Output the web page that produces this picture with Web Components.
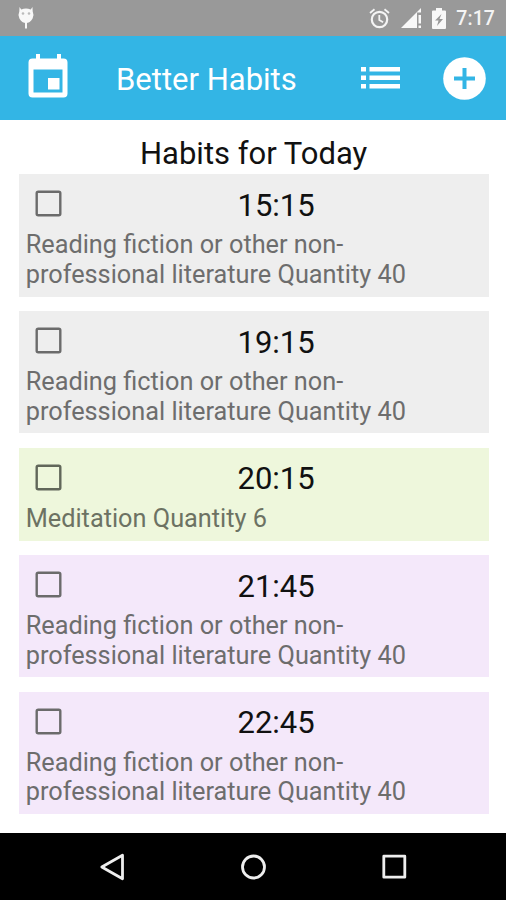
<!DOCTYPE html>
<html lang="en">
<head>
<meta charset="utf-8">
<title>Better Habits</title>
<style>
    body {
        margin: 0;
        background: #fff;
        font-family: Roboto, 'Noto Sans', sans-serif;
    }
</style>
</head>
<body>
<habits-app></habits-app>

<script>
// Android status bar: notification, alarm, signal, battery, clock
class StatusBar extends HTMLElement {
    constructor() {
        super();
        this.attachShadow({ mode: 'open' });
    }

    connectedCallback() {
        this.shadowRoot.innerHTML = `
        <style>
            :host {
                display: flex;
                align-items: center;
                height: 36px;
                box-sizing: border-box;
                padding: 0 11px 0 17px;
                background: #999;
                color: #f4f4f4;
            }
            svg { display: block; fill: #f8f8f8; }
            .alarm { margin-left: auto; }
            .signal { margin-left: 11px; }
            .battery { margin-left: 11px; }
            time {
                margin-left: 10px;
                font-size: 19.5px;
                font-weight: 500;
                letter-spacing: 0.1px;
                line-height: 36px;
                padding-top: 2px;
            }
        </style>
        <svg width="18" height="24" viewBox="0 0 18 24">
            <path d="M2.500 1l1.800 2.600Q9 1.600 13.700 3.600L15.500 1l.2 4.500Q17.400 9 15.600 12.500Q13 17 9 17T2.400 12.500Q.6 9 2.300 5.500z"/>
            <path d="M8 16h2v6l-1 1-1-1z"/>
            <circle cx="6" cy="7.500" r="1.300" fill="#bbb"/>
            <circle cx="12" cy="7.500" r="1.300" fill="#bbb"/>
        </svg>
        <svg class="alarm" width="21" height="21" viewBox="0 0 21 21">
            <circle cx="10.500" cy="11.500" r="7.700" fill="none" stroke="#f4f4f4" stroke-width="2.200"/>
            <path d="M10.300 7v5l3.800 2.300M1 5l4.500-3.700M20 5l-4.500-3.700" fill="none" stroke="#f4f4f4" stroke-width="1.800"/>
        </svg>
        <svg class="signal" width="20" height="20" viewBox="0 0 20 20">
            <path d="M0 20L20 0v4.500h-4V20zM17.500 7H20v8.500h-2.500zM17.500 17.500H20V20h-2.500z"/>
        </svg>
        <svg class="battery" width="14" height="21" viewBox="0 0 14 21">
            <path fill-rule="evenodd" d="M4 0h6v2.500h3q1 0 1 1V20q0 1-1 1H1q-1 0-1-1V3.500q0-1 1-1h3zM9.500 6L3 12.500h3.500L5 18l6-7H7.500z"/>
        </svg>
        <time>7:17</time>
        `;
    }
}
customElements.define('status-bar', StatusBar);

// Blue bar with the title in the slot
class AppHeader extends HTMLElement {
    constructor() {
        super();
        this.attachShadow({ mode: 'open' });
    }

    connectedCallback() {
        this.shadowRoot.innerHTML = `
        <style>
            :host {
                display: flex;
                align-items: center;
                height: 84px;
                box-sizing: border-box;
                padding: 0 20px 0 28px;
                background: #33b5e5;
                color: #fff;
            }
            button {
                display: block;
                padding: 0;
                border: 0;
                background: none;
            }
            svg { display: block; fill: #fff; }
            h1 {
                margin: 3px 0 0 48px;
                flex: 1;
                font-size: 31px;
                font-weight: 400;
                white-space: nowrap;
            }
            .calendar { margin-top: -4px; }
            .add { margin-left: 43px; }
        </style>
        <button class="calendar" aria-label="Calendar">
            <svg width="40" height="44" viewBox="0 0 40 44">
                <path fill-rule="evenodd" d="M8 0h4v4.500h17V0h4v4.500h2.500q4 0 4 4V39.500q0 4-4 4H4.500q-4 0-4-4V8.500q0-4 4-4H8zM5.500 15.500V38.500h29V15.500z"/>
                <path d="M20 24h11.500v11.500H20z"/>
            </svg>
        </button>
        <h1><slot></slot></h1>
        <button aria-label="List">
            <svg width="39" height="22" viewBox="0 0 39 22">
                <path d="M0 0h5v4.500H0zM8.500 0H39v4.500H8.500zM0 8.500h5V13H0zM8.500 8.500H39V13H8.500zM0 17h5v4.500H0zM8.500 17H39v4.500H8.500z"/>
            </svg>
        </button>
        <button class="add" aria-label="Add">
            <svg width="43" height="43" viewBox="0 0 43 43">
                <circle cx="21.500" cy="21.500" r="21.300"/>
                <path d="M21.500 11v21M11 21.500h21" stroke="#33b5e5" stroke-width="4"/>
            </svg>
        </button>
        `;
    }
}
customElements.define('app-header', AppHeader);

// One habit: checkbox, time attribute, description in the slot
class HabitCard extends HTMLElement {
    constructor() {
        super();
        this.attachShadow({ mode: 'open' });
    }

    connectedCallback() {
        this.shadowRoot.innerHTML = `
        <style>
            :host {
                display: block;
                box-sizing: border-box;
                padding: 7px 7px 7.200px;
                background: #eee;
            }
            :host([color="green"]) { background: #eef7dc; }
            :host([color="purple"]) { background: #f4e8fa; }
            .top {
                display: flex;
                align-items: center;
                height: 48px;
            }
            .box {
                display: block;
                margin: -3px 9px 0 9px;
                fill: none;
                stroke: #6b6b6b;
                stroke-width: 2.400;
            }
            time {
                flex: 1;
                text-align: center;
                font-size: 31px;
                color: #111;
            }
            p {
                margin: 1px 0 0;
                font-size: 25.300px;
                line-height: 29.600px;
                color: #6d6d6d;
            }
            :host([color="green"]) p { color: #6c7263; }
            :host([color="green"]) .box { stroke: #61675a; }
        </style>
        <div class="top">
            <svg class="box" width="27" height="27" viewBox="0 0 27 27" role="checkbox" aria-checked="false">
                <rect x="1.700" y="1.700" width="23.600" height="23.600" rx="1.500"/>
            </svg>
            <time>${this.getAttribute('time')}</time>
        </div>
        <p><slot></slot></p>
        `;
    }
}
customElements.define('habit-card', HabitCard);

class NavBar extends HTMLElement {
    constructor() {
        super();
        this.attachShadow({ mode: 'open' });
    }

    connectedCallback() {
        this.shadowRoot.innerHTML = `
        <style>
            :host {
                display: flex;
                align-items: center;
                justify-content: center;
                gap: 114px;
                height: 67px;
                background: #000;
            }
            svg {
                display: block;
                fill: none;
                stroke: #eee;
                stroke-width: 2.800;
                stroke-linejoin: round;
            }
        </style>
        <svg width="27" height="28" viewBox="0 0 27 28"><path d="M2.800 14L23.500 2.200v23.600z"/></svg>
        <svg width="27" height="28" viewBox="0 0 27 28"><circle cx="13.500" cy="14" r="11"/></svg>
        <svg width="27" height="28" viewBox="0 0 27 28"><rect x="2.800" y="3.200" width="21" height="21"/></svg>
        `;
    }
}
customElements.define('nav-bar', NavBar);

const habits = [
    { time: '15:15', color: 'grey', text: 'Reading fiction or other non-professional literature Quantity 40' },
    { time: '19:15', color: 'grey', text: 'Reading fiction or other non-professional literature Quantity 40' },
    { time: '20:15', color: 'green', text: 'Meditation Quantity 6' },
    { time: '21:45', color: 'purple', text: 'Reading fiction or other non-professional literature Quantity 40' },
    { time: '22:45', color: 'purple', text: 'Reading fiction or other non-professional literature Quantity 40' }
];

class HabitsApp extends HTMLElement {
    constructor() {
        super();
        this.attachShadow({ mode: 'open' });
    }

    connectedCallback() {
        this.shadowRoot.innerHTML = `
        <style>
            :host {
                display: flex;
                flex-direction: column;
                height: 900px;
                overflow: hidden;
            }
            main {
                flex: 1;
                min-height: 0;
                padding: 0 17.500px 0 18.700px;
            }
            h2 {
                margin: 0;
                padding-top: 14px;
                height: 40.300px;
                line-height: 40px;
                text-align: center;
                font-size: 31px;
                font-weight: 400;
                color: #111;
            }
            .list {
                display: flex;
                flex-direction: column;
                gap: 14.400px;
            }
        </style>
        <status-bar></status-bar>
        <app-header>Better Habits</app-header>
        <main>
            <h2>Habits for Today</h2>
            <div class="list">
                ${habits.map(h => `<habit-card time="${h.time}" color="${h.color}">${h.text}</habit-card>`).join('')}
            </div>
        </main>
        <nav-bar></nav-bar>
        `;
    }
}
customElements.define('habits-app', HabitsApp);
</script>
</body>
</html>
